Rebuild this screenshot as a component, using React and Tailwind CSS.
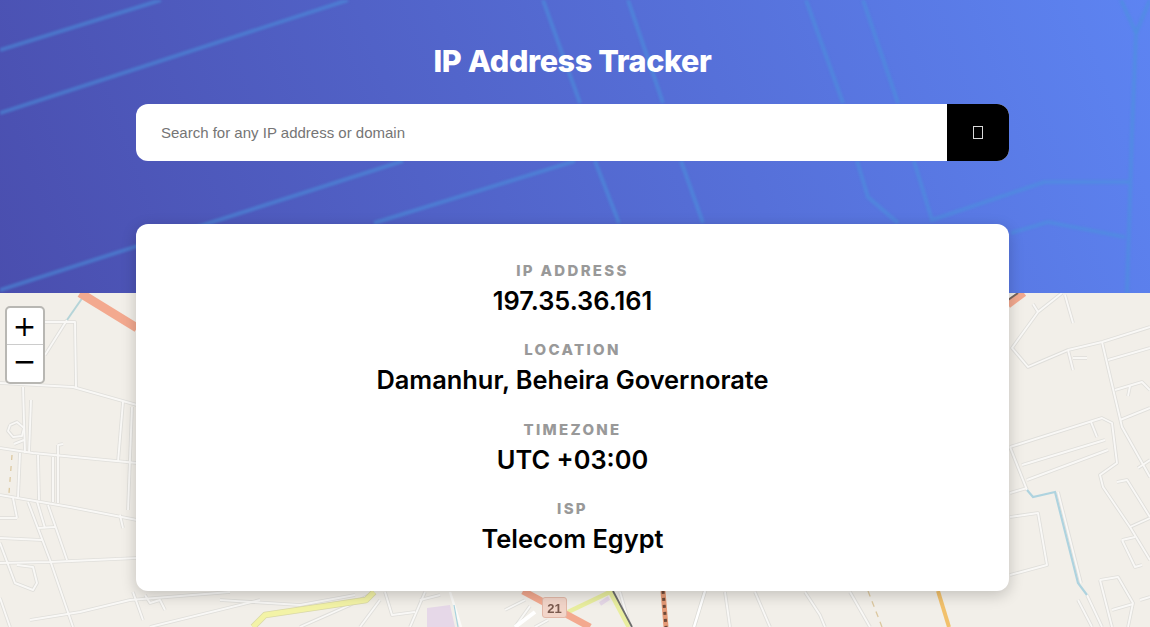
const headerLines = [
  "0,50 161,0",
  "0,113 348,0",
  "0,290 403,161",
  "374,223 575,161",
  "543,0 580,103",
  "628,0 663,103",
  "595,161 619,223",
  "681,161 703,223",
  "806,0 843,103",
  "863,0 898,103",
  "857,161 868,197 898,223",
  "914,161 932,220 1044,182 1129,182",
  "1011,233 1048,222 1125,237",
  "1121,0 1136,33 1132,133 1127,293",
  "1150,0 1136,33",
];

const roads = [
  "67,320 45,355",
  "0,383 73,387 137,405",
  "45,322 75,322 76,387",
  "23,387 25,453",
  "31,400 29,453",
  "0,448 33,453 137,463",
  "0,495 70,507 137,520",
  "20,453 18,497",
  "38,455 39,500",
  "53,457 53,502",
  "58,445 58,503",
  "58,445 63,444",
  "123,402 118,462",
  "132,407 128,510",
  "28,502 50,560 73,627",
  "13,498 17,518",
  "37,501 45,528",
  "48,505 67,560",
  "0,563 50,562 137,558",
  "0,538 42,540",
  "0,518 17,518",
  "38,528 55,527",
  "0,543 15,583 33,590 37,583 33,567 17,565",
  "120,515 123,528",
  "10,425 17,422 24,428 22,436 13,437 8,431 10,425",
  "14,444 24,440",
  "1150,327 1102,342 1068,350 1028,367 1012,348 1038,312 1062,293",
  "1065,295 1073,323",
  "1038,312 1033,304",
  "1068,350 1073,370",
  "1073,358 1087,358",
  "1102,342 1122,427 1150,477",
  "1108,360 1150,348",
  "1115,390 1142,382 1150,390",
  "1130,386 1128,396",
  "1120,420 1150,408",
  "1010,447 1102,418 1112,423 1117,463 1100,475 1103,487 1130,527 1150,560",
  "1091,422 1097,437",
  "1022,465 1105,440",
  "1027,480 1108,450",
  "1010,447 1027,490",
  "1010,493 1027,488",
  "1010,517 1038,513 1047,565 1010,575",
  "1130,527 1150,518",
  "1122,540 1135,567 1142,565",
  "1122,540 1135,537",
  "1117,482 1127,480 1150,517",
  "1058,492 1081,583",
  "1087,595 1102,627",
  "1078,600 1092,627",
  "1100,580 1118,577 1133,603 1128,627",
  "1100,580 1112,627",
  "1112,610 1133,604",
  "1138,468 1150,460",
  "1140,600 1150,597",
  "133,592 143,620",
  "145,595 150,603 160,600 165,610",
  "0,598 10,627",
  "30,620 80,612 130,600 230,592",
  "220,600 300,605 355,595",
  "150,627 260,600",
  "300,627 350,605 375,592",
  "385,592 392,615 415,612",
  "360,627 380,600",
  "420,600 440,595",
  "410,627 425,592",
  "515,627 530,606",
  "505,610 525,600",
  "535,627 548,620",
  "755,592 770,627",
  "725,592 730,627",
  "620,592 630,627",
  "805,592 820,615 825,627",
  "850,592 870,627",
];

function App() {
  return (
    <div className="relative flex h-screen w-full flex-col overflow-hidden font-['Inter',sans-serif]">
      <header className="relative flex h-[293px] shrink-0 flex-col items-center bg-linear-[70deg] from-[#4a4eae] to-[#5d84f2] pt-[41px] pr-[5px]">
        <svg className="absolute inset-0 h-full w-full blur-[1px]" viewBox="0 0 1150 293" fill="none">
          {headerLines.map((pts) => (
            <polyline key={pts} points={pts} stroke="#4b92dc" strokeOpacity="0.55" strokeWidth="4" />
          ))}
        </svg>
        <h1 className="relative text-[30.6px] leading-[40px] font-extrabold tracking-[-0.4px] text-white">IP Address Tracker</h1>
        <form className="relative mt-[23px] flex h-[57px] w-[873px] overflow-hidden rounded-xl bg-white">
          <input
            className="flex-1 px-[25px] pt-[1px] font-['Liberation_Sans',sans-serif] text-[15px] text-black outline-none placeholder:text-[#757575]"
            placeholder="Search for any IP address or domain"
          />
          <button type="button" className="flex w-[62px] items-center justify-center bg-black">
            <span className="h-[13px] w-[10px] border border-[#d8d8d8]"></span>
          </button>
        </form>
      </header>

      <div className="relative flex-1 bg-[#f2efe9]">
        <svg className="h-full w-full blur-[0.6px]" viewBox="0 293 1150 334" fill="none">
          <path d="M427 608 450 605 455 627 427 627Z" fill="#e6d8e8" />
          {roads.map((pts) => (
            <polyline key={pts} points={pts} stroke="#dfdeda" strokeWidth="3.6" strokeLinejoin="round" />
          ))}
          {roads.map((pts) => (
            <polyline key={pts + "-in"} points={pts} stroke="#f9f8f6" strokeWidth="1.9" strokeLinejoin="round" />
          ))}
          <polyline points="83,297 67,320" stroke="#b5d4d8" strokeWidth="2" />
          <polyline points="1027,490 1033,497 1055,492 1078,583 1087,595" stroke="#aed3df" strokeWidth="2.2" />
          <polyline points="450,592 461,627" stroke="#fbfaf8" strokeWidth="2.5" />
          <polyline points="454,605 458,627" stroke="#a9d3de" strokeWidth="1.2" />
          <polyline points="12,455 9,493" stroke="#dcc8a0" strokeWidth="1.3" strokeDasharray="5 6" />
          <polyline points="868,591 882,627" stroke="#dcc8a0" strokeWidth="1.3" strokeDasharray="6 5" />
          <polyline points="80,293 137,328" stroke="#f3a98f" strokeWidth="9" />
          <polyline points="1008,305 1024,293" stroke="#f3a98f" strokeWidth="7" />
          <polyline points="1008,300 1018,293" stroke="#77655e" strokeWidth="2" />
          <polyline points="374,592 366,600 265,615 253,627" stroke="#d9d8a8" strokeWidth="6.5" strokeLinejoin="round" />
          <polyline points="374,592 366,600 265,615 253,627" stroke="#f3f3a6" strokeWidth="5" strokeLinejoin="round" />
          <polyline points="568,612 612,591" stroke="#e9ee9f" strokeWidth="4.5" />
          <polyline points="610,591 629,627" stroke="#e9ee9f" strokeWidth="5" />
          <polyline points="613,591 632,627" stroke="#6c6c6c" strokeWidth="1.8" />
          <polyline points="523,591 590,627" stroke="#f3a98f" strokeWidth="7" />
          <polyline points="663,591 666,627" stroke="#e59a76" strokeWidth="5" />
          <polyline points="663,591 666,627" stroke="#6e4a38" strokeWidth="3" strokeDasharray="3 4" />
          <polyline points="705,591 694,627" stroke="#dcdbd6" strokeWidth="4" />
          <polyline points="705,591 694,627" stroke="#ffffff" strokeWidth="2.5" />
          <polyline points="938,591 949,627" stroke="#f2c16c" strokeWidth="4" />
          <polyline points="515,627 535,612" stroke="#ffffff" strokeWidth="4" />
          <path d="M600 604 609 598" stroke="#e6d8e8" strokeWidth="4" />
          <rect x="542.5" y="597.5" width="24" height="20" rx="2.5" fill="#f2d5c9" stroke="#e2b8a8" />
          <text x="554.5" y="612.5" textAnchor="middle" fontSize="13" fontWeight="bold" fontFamily="Liberation Sans, sans-serif" fill="#7a5a4e">21</text>
        </svg>
        <div className="absolute top-[13px] left-[4.5px] flex w-[40px] flex-col overflow-hidden rounded-[5px] border-2 border-[#b8b7b3] bg-white bg-clip-padding font-['DejaVu_Sans',sans-serif] text-black">
          <a className="flex h-[37px] items-center justify-center border-b border-[#ccc] pt-[1px] text-[28px] leading-none">+</a>
          <a className="flex h-[37px] items-center justify-center pb-[3px] text-[28px] leading-none">−</a>
        </div>
      </div>

      <section className="absolute top-[224px] left-[136px] flex h-[367px] w-[873px] flex-col gap-[24.3px] rounded-xl bg-white pt-[37px] text-center shadow-[0_4px_15px_rgba(0,0,0,0.2)]">
        {[
          ["IP ADDRESS", "197.35.36.161"],
          ["LOCATION", "Damanhur, Beheira Governorate"],
          ["TIMEZONE", "UTC +03:00"],
          ["ISP", "Telecom Egypt"],
        ].map(([label, value]) => (
          <div key={label}>
            <p className="text-[15px] leading-[20px] font-extrabold tracking-[2.3px] text-[#999999]">{label}</p>
            <p className="mt-[5px] text-[25.4px] leading-[30px] font-semibold text-black">{value}</p>
          </div>
        ))}
      </section>
    </div>
  );
}

export default App;
